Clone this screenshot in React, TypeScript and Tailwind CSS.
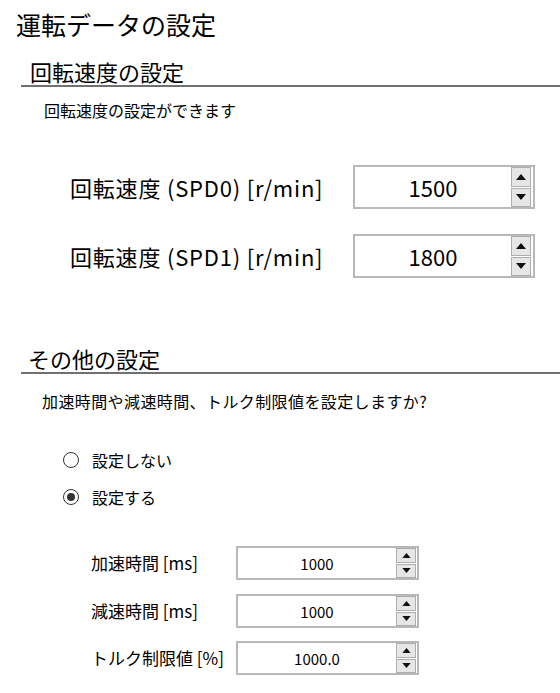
import React from "react";

const font = "font-['Noto_Sans_CJK_JP','Liberation_Sans',sans-serif]";

const Arrow = ({ up, small }: { up?: boolean; small?: boolean }) => (
  <svg width={small ? 9 : 10} height={small ? 5 : 6} viewBox="0 0 10 6">
    {up ? <polygon points="5,0 10,6 0,6" fill="#111" /> : <polygon points="0,0 10,0 5,6" fill="#111" />}
  </svg>
);

const SpinBox = ({ value, small }: { value: string; small?: boolean }) => (
  <div
    className={
      small
        ? "flex h-[34px] w-[183px] items-stretch border-2 border-[#b8b8b8] bg-white"
        : "flex h-[44px] w-[182px] items-stretch border-2 border-[#b8b8b8] bg-white"
    }
  >
    <div
      className={
        small
          ? "flex flex-1 items-center justify-center text-[15px] leading-none text-black"
          : "flex flex-1 items-center justify-center text-[22px] leading-none text-black"
      }
    >
      {value}
    </div>
    {/* up / down buttons */}
    <div className={small ? "flex w-[21px] flex-col gap-px pr-px" : "flex w-[22px] flex-col gap-px pr-[2px]"}>
      <div className="flex flex-1 items-center justify-center border border-[#adadad] bg-[#e6e6e6]">
        <Arrow up small={small} />
      </div>
      <div className="flex flex-1 items-center justify-center border border-[#adadad] bg-[#e6e6e6]">
        <Arrow small={small} />
      </div>
    </div>
  </div>
);

const Radio = ({ checked, label, className }: { checked?: boolean; label: string; className?: string }) => (
  <div className={"flex h-[22px] items-center pl-[63px] " + (className ?? "")}>
    <div className="flex h-[16px] w-[16px] items-center justify-center rounded-full border-[1.5px] border-[#333]">
      {checked && <div className="h-[8px] w-[8px] rounded-full bg-[#333]" />}
    </div>
    <span className="ml-[13px] text-[16px] leading-[22px] text-black">{label}</span>
  </div>
);

export default function App() {
  return (
    <div className={"h-[693px] w-[560px] overflow-hidden bg-white text-black " + font}>
      <h1 className="pl-[16px] pt-[6px] text-[25px] font-normal leading-[36px]">運転データの設定</h1>

      {/* 回転速度 */}
      <div className="ml-[21px] mt-[15px] border-b-2 border-[#707070] pl-[9px] text-[22px] leading-[28px]">
        回転速度の設定
      </div>
      <p className="mt-[12px] pl-[44px] text-[16px] leading-[22px]">回転速度の設定ができます</p>

      <div className="mt-[44px] flex items-center">
        <div className="w-[353px] pl-[70px] text-[22px] leading-[28px] tracking-[0.8px]">回転速度 (SPD0) [r/min]</div>
        <SpinBox value="1500" />
      </div>
      <div className="mt-[25px] flex items-center">
        <div className="w-[353px] pl-[70px] text-[22px] leading-[28px] tracking-[0.8px]">回転速度 (SPD1) [r/min]</div>
        <SpinBox value="1800" />
      </div>

      {/* その他 */}
      <div className="ml-[21px] mt-[66px] border-b-2 border-[#707070] pl-[7px] text-[22px] leading-[28px]">
        その他の設定
      </div>
      <p className="mt-[16px] pl-[42px] text-[16px] leading-[22px] tracking-[0.4px]">
        加速時間や減速時間、トルク制限値を設定しますか?
      </p>

      <Radio label="設定しない" className="mt-[37px]" />
      <Radio checked label="設定する" className="mt-[15px]" />

      <div className="mt-[38px] flex items-center">
        <div className="w-[236px] pl-[91px] text-[17px] leading-[22px]">加速時間 [ms]</div>
        <SpinBox small value="1000" />
      </div>
      <div className="mt-[14px] flex items-center">
        <div className="w-[236px] pl-[91px] text-[17px] leading-[22px]">減速時間 [ms]</div>
        <SpinBox small value="1000" />
      </div>
      <div className="mt-[13px] flex items-center">
        <div className="w-[236px] pl-[91px] text-[17px] leading-[22px]">トルク制限値 [%]</div>
        <SpinBox small value="1000.0" />
      </div>
    </div>
  );
}
